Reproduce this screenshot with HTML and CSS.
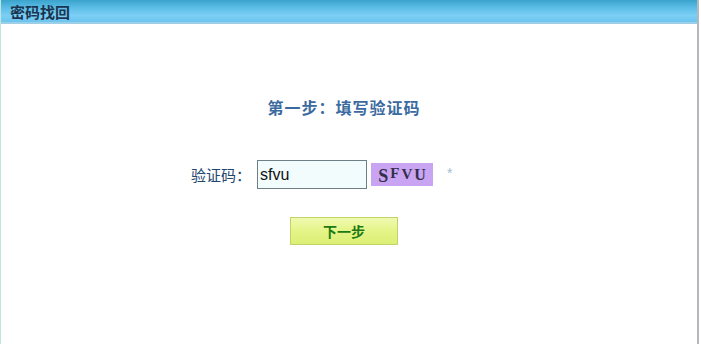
FILE: index.html
```html
<!DOCTYPE html>
<html lang="zh">
<head>
<meta charset="utf-8">
<title>密码找回</title>
<link rel="stylesheet" href="styles.css">
</head>
<body>
<div class="panel">
  <div class="hd">密码找回</div>
  <div class="content">
    <h2 class="step">第一步：填写验证码</h2>
    <div class="row">
      <span class="label">验证码：</span>
      <input class="code-input" type="text" value="sfvu">
      <span class="captcha"><span class="c1">S</span><span class="c2">F</span><span class="c3">V</span><span class="c4">U</span></span>
      <span class="star">*</span>
    </div>
    <div class="actions">
      <button class="btn" type="button">下一步</button>
    </div>
  </div>
</div>
</body>
</html>
```
FILE: styles.css
```css
html, body {
  margin: 0;
  padding: 0;
  background: #ffffff;
}
body {
  font-family: "Noto Sans CJK SC", "DejaVu Sans", sans-serif;
  width: 701px;
  height: 344px;
  overflow: hidden;
}
.panel {
  width: 696px;
  height: 344px;
  border-left: 1px solid #bfe6dc;
  border-right: 2px solid #b4b8bc;
  box-sizing: content-box;
}
.hd {
  height: 22px;
  line-height: 23px;
  padding-left: 9px;
  font-size: 15px;
  font-weight: bold;
  color: #1a3550;
  background: linear-gradient(to bottom, #3aa3cc 0%, #5cbde6 35%, #7ccff6 70%, #6cc4ee 100%);
  border-bottom: 2px solid #9dd0e8;
}
.content {
  display: flex;
  flex-direction: column;
  align-items: center;
  padding-right: 10px;
}
.step {
  margin: 72px 0 0 0;
  font-size: 16px;
  line-height: 22px;
  font-weight: bold;
  color: #3b6aa0;
  letter-spacing: 1px;
}
.row {
  margin-top: 42px;
  display: flex;
  align-items: center;
  margin-right: 40px;
}
.label {
  font-size: 15px;
  color: #1e466e;
  margin-right: 6px;
}
.code-input {
  box-sizing: border-box;
  width: 110px;
  height: 29px;
  border: 1px solid #6f7f8a;
  background: #f2fcfc;
  font-family: "Liberation Sans", Arial, sans-serif;
  font-size: 16px;
  padding: 0 2px;
  color: #111;
  margin: 0;
  outline: none;
}
.captcha {
  margin-left: 4px;
  width: 62px;
  height: 23px;
  background: #c9a4f2;
  font-family: "Liberation Serif", serif;
  font-weight: bold;
  color: #332f48;
  display: flex;
  align-items: center;
  justify-content: center;
  gap: 2px;
}
.c1 { font-size: 18px; margin-top: 4px; }
.c2 { font-size: 15px; margin-top: -2px; }
.c3 { font-size: 15px; }
.c4 { font-size: 16px; margin-top: 1px; }
.star {
  margin-left: 14px;
  font-family: "Liberation Sans", sans-serif;
  font-size: 14px;
  color: #a8bccc;
  width: 10px;
  margin-top: -3px;
}
.actions {
  margin-top: 28px;
}
.btn {
  width: 108px;
  height: 28px;
  border: 1px solid #c0d46a;
  background: linear-gradient(to bottom, #f0fab0 0%, #e4f488 50%, #dcef74 100%);
  color: #1d7a12;
  font-family: "Noto Sans CJK SC", sans-serif;
  font-size: 14px;
  font-weight: bold;
  padding: 0;
}
```
